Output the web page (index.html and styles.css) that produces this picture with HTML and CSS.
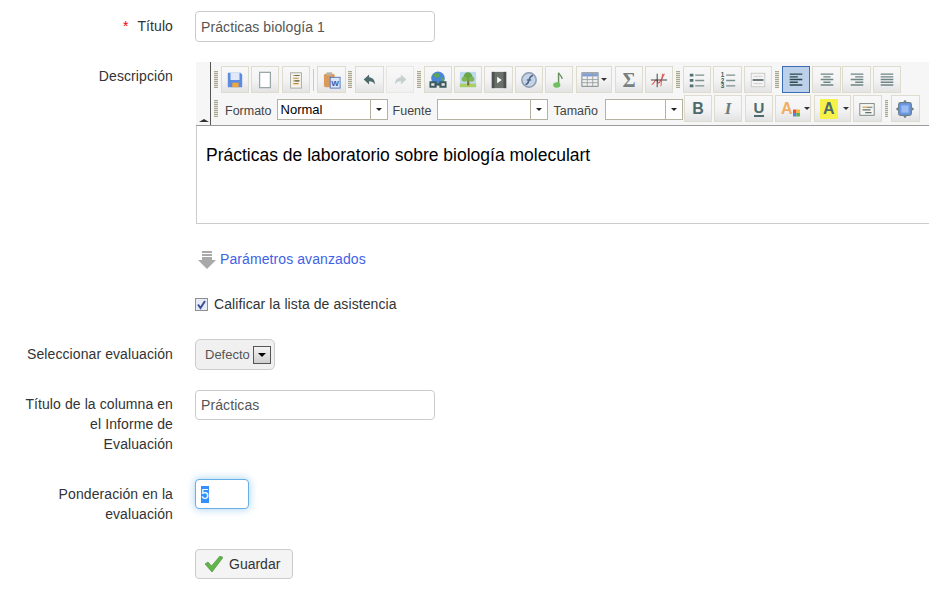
FILE: index.html
```html
<!DOCTYPE html>
<html lang="es">
<head>
    <meta charset="UTF-8">
    <meta name="viewport" content="width=device-width, initial-scale=1.0">
    <title>Editar asistencia</title>
    <link rel="stylesheet" href="styles.css">
</head>
<body>

<form class="form">

    <div class="row row-title">
        <label class="label"><span class="req">*</span>Título</label>
        <input class="input" type="text" value="Prácticas biología 1">
    </div>

    <div class="row row-editor">
        <label class="label">Descripción</label>
        <div class="editor">
            <div class="toolbar">
                <div class="tb-side"><span class="collapse"></span></div>
                <div class="tb-rows">
                    <div class="tb-row">
                        <span class="grip"></span>
                        <span class="btn"><svg viewBox="0 0 20 20"><path d="M2 2h14l2 2v14H2z" fill="#5c8be0"/><rect x="5" y="2" width="10" height="8" fill="#dfe9fa"/><rect x="7" y="13" width="7" height="5" fill="#f0a63a"/></svg></span>
                        <span class="btn mr"><svg viewBox="0 0 20 20"><rect x="4" y="1.500" width="12" height="17" fill="#fff" stroke="#9aa5a5" stroke-width="1.400"/></svg></span>
                        <span class="btn mr"><svg viewBox="0 0 20 20"><rect x="4" y="2" width="12" height="17" fill="#f4f2ea" stroke="#a3a79e"/><path d="M7 5h6M7 8h6M7 11h6M7 14h6" stroke="#c28a3c" stroke-width="1.200"/><path d="M9 5h5M9 11h5" stroke="#56705f" stroke-width="1.200"/></svg></span>
                        <span class="sep"></span>
                        <span class="btn wide"><svg viewBox="0 0 20 20"><rect x="1" y="3" width="12" height="15" rx="2" fill="#d99a5c"/><rect x="4" y="1.500" width="6" height="3.500" fill="#b7b3a5"/><rect x="8" y="7" width="11" height="12" fill="#dce6f7" stroke="#4f72b8"/><text x="9.300" y="16.500" class="tiny-w">W</text></svg></span>
                        <span class="grip"></span>
                        <span class="btn wide"><svg viewBox="0 0 20 20"><path d="M9 4 3 9.500 9 15v-3.500c3 0 5 .8 6.500 3.500 0-5-2.500-7.500-6.500-8z" fill="#4d6a6c"/></svg></span>
                        <span class="btn off mr"><svg viewBox="0 0 20 20"><path d="M11 4l6 5.500L11 15v-3.500c-3 0-5 .8-6.500 3.500 0-5 2.500-7.500 6.500-8z" fill="#c6d0d0"/></svg></span>
                        <span class="grip"></span>
                        <span class="btn"><svg viewBox="0 0 20 20"><circle cx="10" cy="8" r="7.500" fill="#4a86d8"/><path d="M6 3c3-1 6 0 6 2s-3 3-5 2-2-3-1-4zM13 8c2-1 4 0 4 2l-3 3z" fill="#5aa852"/><path d="M1.500 12.500h6v5h-6zM12.500 12.500h6v5h-6z" fill="#e6e6e6" stroke="#3d5a5c" stroke-width="2"/><path d="M6 15h8" stroke="#3d5a5c" stroke-width="2.500"/></svg></span>
                        <span class="btn"><svg viewBox="0 0 20 20"><rect x="1" y="1" width="18" height="17" fill="#bcd9ee"/><rect x="1" y="14" width="18" height="4" fill="#a9cf63"/><rect x="9" y="9" width="2.500" height="7" fill="#8a6a3c"/><circle cx="10" cy="6.500" r="5" fill="#6aa648"/><circle cx="6" cy="9" r="3" fill="#7fb552"/><circle cx="14" cy="9" r="3" fill="#7fb552"/></svg></span>
                        <span class="btn wide"><svg viewBox="0 0 20 20"><rect x="2" y="1" width="16" height="18" fill="#6c706d"/><rect x="2" y="1" width="3" height="18" fill="#4d514f"/><rect x="15" y="1" width="3" height="18" fill="#4d514f"/><path d="M8 6.500 13 10l-5 3.500z" fill="#fff"/></svg></span>
                        <span class="btn"><svg viewBox="0 0 20 20"><circle cx="10" cy="10" r="8" fill="#c5d3e6" stroke="#8a9ab0" stroke-width="1.600"/><path d="M6 15c3 0 3-2 4-5s2-5 4.500-5" fill="none" stroke="#4d6486" stroke-width="1.800"/><path d="M7.500 10h5" stroke="#4d6486" stroke-width="1.400"/></svg></span>
                        <span class="btn mr"><svg viewBox="0 0 20 20"><path d="M9.500 2v13" stroke="#6b8f5c" stroke-width="1.600"/><path d="M9.500 2c1 3 4 3 4 7" fill="none" stroke="#6b8f5c" stroke-width="1.400"/><ellipse cx="7.500" cy="15.500" rx="4" ry="3" fill="#6cc25e"/></svg></span>
                        <span class="btn btn-table"><svg viewBox="0 0 20 20"><rect x="1" y="2" width="18" height="15" fill="#efefef" stroke="#777e7e"/><rect x="1.500" y="2.500" width="17" height="3.500" fill="#7f9fd4"/><path d="M1 9.500h18M1 13h18M7 2v15M13 2v15" stroke="#9ba2a2"/></svg><i class="caret"></i></span>
                        <span class="btn"><span class="glyph sigma">Σ</span></span>
                        <span class="btn mr"><svg viewBox="0 0 20 20"><path d="M2 15c3-1 3-5 5-5s1 4 3 3 4-7 6-10" fill="none" stroke="#d9534f" stroke-width="1.300"/><path d="M1 10h18M8 3v15" stroke="#333" stroke-width="1"/><path d="M14 3 12 17" stroke="#d9534f"/></svg></span>
                        <span class="grip"></span>
                        <span class="btn"><svg viewBox="0 0 20 20"><path d="M2 3h4v3H2zM2 9h4v3H2zM2 15h4v3H2z" fill="#4f6f70"/><path d="M8 4.500h10M8 10.500h10M8 16.500h10" stroke="#7c8f8f" stroke-width="1.500"/></svg></span>
                        <span class="btn wide"><svg viewBox="0 0 20 20"><text x="2" y="7" class="tiny-n">1</text><text x="2" y="13" class="tiny-n">2</text><text x="2" y="19" class="tiny-n">3</text><path d="M8 4.500h10M8 10.500h10M8 16.500h10" stroke="#7c8f8f" stroke-width="1.500"/></svg></span>
                        <span class="btn mr"><svg viewBox="0 0 20 20"><rect x="2.500" y="2.500" width="15" height="15" fill="#f4f4f4" stroke="#c4c8c4"/><path d="M5 6h10M5 14h10" stroke="#c9cdc9"/><path d="M4 10h12" stroke="#5a6e6e" stroke-width="2"/></svg></span>
                        <span class="grip"></span>
                        <span class="btn active"><svg viewBox="0 0 20 20"><path d="M3 3.500h14M3 6.500h9M3 9.500h14M3 12.500h9M3 15.500h14" stroke="#2f4a4c" stroke-width="1.600"/></svg></span>
                        <span class="btn wide ml-tight"><svg viewBox="0 0 20 20"><path d="M3 3.500h14M6 6.500h8M3 9.500h14M6 12.500h8M3 15.500h14" stroke="#6e8585" stroke-width="1.600"/></svg></span>
                        <span class="btn wide"><svg viewBox="0 0 20 20"><path d="M3 3.500h14M8 6.500h9M3 9.500h14M8 12.500h9M3 15.500h14" stroke="#6e8585" stroke-width="1.600"/></svg></span>
                        <span class="btn"><svg viewBox="0 0 20 20"><path d="M3 3.500h14M3 6.500h14M3 9.500h14M3 12.500h14M3 15.500h14" stroke="#6e8585" stroke-width="1.600"/></svg></span>
                    </div>
                    <div class="tb-row">
                        <span class="grip"></span>
                        <span class="tb-label tb-format">Formato</span>
                        <span class="combo combo-format"><span class="combo-text">Normal</span><i class="combo-arrow"></i></span>
                        <span class="tb-label tb-font">Fuente</span>
                        <span class="combo combo-font"><span class="combo-text"></span><i class="combo-arrow"></i></span>
                        <span class="tb-label tb-size">Tamaño</span>
                        <span class="combo combo-size"><span class="combo-text"></span><i class="combo-arrow"></i></span>
                        <span class="btn"><span class="glyph bold">B</span></span>
                        <span class="btn mr"><span class="glyph ital">I</span></span>
                        <span class="btn"><span class="glyph under">U</span></span>
                        <span class="btn btn-color"><span class="glyph color">A</span><svg class="swatch" viewBox="0 0 8 8"><rect width="4" height="4" fill="#e8503a"/><rect x="4" width="4" height="4" fill="#f2b632"/><rect y="4" width="4" height="4" fill="#4f86d9"/><rect x="4" y="4" width="4" height="4" fill="#5cb04a"/></svg><i class="caret"></i></span>
                        <span class="btn btn-color btn-hilite"><span class="glyph hilite">A</span><i class="caret"></i></span>
                        <span class="btn wide mr"><svg viewBox="0 0 20 20"><rect x="2" y="4" width="16" height="13" fill="#f6f6f0" stroke="#75807f"/><path d="M5 8h5" stroke="#d9a65a" stroke-width="1.500"/><path d="M10 8h6M5 11h9M8 14h7" stroke="#5e7171" stroke-width="1.200"/></svg></span>
                        <span class="grip grip-thin"></span>
                        <span class="btn wide"><svg viewBox="0 0 20 20"><path d="M10 0l2 2H8zM10 20l-2-2h4zM0 10l2-2v4zM20 10l-2 2V8z" fill="#45606a"/><rect x="3" y="3" width="14" height="14" rx="2" fill="#6a98e6" stroke="#6a808a" stroke-width="1.400"/><rect x="6" y="6" width="8" height="8" fill="#9abcf2"/></svg></span>
                    </div>
                </div>
            </div>
            <div class="editor-body">Prácticas de laboratorio sobre biología moleculart</div>
        </div>
    </div>

    <div class="row row-link">
        <span></span>
        <a class="adv-link" href="#">
            <svg class="adv-ico" viewBox="0 0 18 18"><path d="M4 0h10v2H4zM4 3h10v2H4zM4 6h10v3h4l-9 9-9-9h4z" fill="#a9a9a9"/></svg>
            Parámetros avanzados
        </a>
    </div>

    <div class="row row-link">
        <span></span>
        <label class="check">
            <svg class="check-box" viewBox="0 0 13 13"><rect x=".5" y=".5" width="12" height="12" fill="#e6ebf5" stroke="#8e8f8f"/><path d="M3 6.500 5.500 10 10 3" fill="none" stroke="#3a4f9a" stroke-width="2"/></svg>
            Calificar la lista de asistencia
        </label>
    </div>

    <div class="row row-select">
        <label class="label">Seleccionar evaluación</label>
        <div class="select"><span>Defecto</span><i class="select-arrow"></i></div>
    </div>

    <div class="row row-col">
        <label class="label label-up">Título de la columna en el Informe de Evaluación</label>
        <input class="input input-short" type="text" value="Prácticas">
    </div>

    <div class="row row-weight">
        <label class="label">Ponderación en la evaluación</label>
        <div class="input input-num"><span class="selected">5</span></div>
    </div>

    <div class="row">
        <span></span>
        <button class="save" type="button">
            <svg viewBox="0 0 18 16"><path d="M0 8l3-2 3.500 4L15 0l3 1.500L7 16z" fill="#62b548" stroke="#3f8a39" stroke-width=".6"/></svg>
            Guardar
        </button>
    </div>

</form>

</body>
</html>
```

FILE: styles.css
```css
html, body {
    overflow-x: hidden;
}

body {
    margin: 0;
    background-color: #ffffff;
    color: #333333;
    font-family: "Liberation Sans", Arial, sans-serif;
    font-size: 14px;
    line-height: 20px;
    letter-spacing: 0.09px;
}

.form {
    padding-top: 11px;
}

.row {
    display: grid;
    grid-template-columns: 150px 1fr;
    column-gap: 22px;
    align-items: start;
    padding-left: 23px;
    margin-bottom: 25px;
}

.row-title {
    margin-bottom: 20px;
}

.row-select {
    margin-bottom: 20px;
}

.row-editor {
    margin-bottom: 24px;
}

.label {
    padding-top: 5px;
    text-align: right;
}

.label-up,
.row-editor .label {
    padding-top: 4px;
}

.req {
    color: #ff0000;
    margin-right: 9px;
}

.input {
    box-sizing: border-box;
    display: block;
    width: 240px;
    height: 31px;
    padding: 0 5px;
    border: 1px solid #cccccc;
    border-radius: 4px;
    background-color: #ffffff;
    color: #555555;
    font: inherit;
    letter-spacing: inherit;
}

.input-short {
    height: 30px;
}

.input-num {
    width: 54px;
    height: 30px;
    line-height: 28px;
    border-color: #66afe9;
    box-shadow: 0 0 8px rgba(102, 175, 233, 0.6);
}

.selected {
    display: inline-block;
    background-color: #3390ff;
    color: #ffffff;
    line-height: 17px;
}

/* editor */

.editor {
    width: 760px;
    margin-left: 1px;
    letter-spacing: 0;
}

.toolbar {
    display: flex;
    height: 63px;
    background-color: #f6f6f6;
    border-bottom: 1px solid #9a9a9a;
}

.tb-side {
    position: relative;
    width: 14px;
    border-right: 1px solid #555555;
}

.collapse {
    position: absolute;
    left: 3px;
    bottom: 3px;
    border-left: 5px solid transparent;
    border-right: 5px solid transparent;
    border-bottom: 3px solid #333333;
}

.tb-rows {
    display: flex;
    flex-direction: column;
    gap: 2px;
    padding: 4px 0 0 3px;
}

.tb-row {
    display: flex;
    align-items: center;
    height: 27px;
}

.grip {
    flex: none;
    width: 4px;
    height: 17px;
    margin-right: 3px;
    background: repeating-linear-gradient(to bottom, #aaa793 0, #aaa793 1px, #e4e2d6 1px, #e4e2d6 2px);
}

.grip-thin {
    width: 3px;
}

.btn {
    box-sizing: border-box;
    flex: none;
    display: flex;
    align-items: center;
    justify-content: center;
    width: 28px;
    height: 27px;
    margin-right: 2px;
    border: 1px solid #dedbcf;
    background: linear-gradient(to bottom, #f8f8f8 0, #f3f3f3 55%, #e3e3e3 100%);
}

.btn > svg {
    width: 18px;
    height: 18px;
}

.wide {
    width: 29px;
}

.mr {
    margin-right: 3px;
}

.ml-tight {
    margin-right: 1px;
}

.btn.off {
    border-color: #e8e8e2;
    background: linear-gradient(to bottom, #f8f8f8 0, #f1f1f1 100%);
}

.btn.active {
    border-color: #3a6db5;
    background: #bcd0ea;
}

.sep {
    flex: none;
    width: 1px;
    height: 22px;
    margin-right: 3px;
    background-color: #c9c9c9;
}

.btn-table {
    width: 36px;
    margin-right: 3px;
    gap: 2px;
}

.caret {
    border-left: 3px solid transparent;
    border-right: 3px solid transparent;
    border-top: 3px solid #333333;
}

.glyph {
    font-family: "Liberation Serif", serif;
    font-size: 17px;
    line-height: 20px;
    color: #4d6a6c;
}

.sigma {
    color: #77807c;
    font-size: 20px;
    font-weight: bold;
}

.bold {
    font-family: "Liberation Sans", sans-serif;
    font-weight: bold;
    font-size: 16px;
}

.ital {
    font-style: italic;
    font-weight: bold;
    color: #6b7b7b;
    font-size: 17px;
}

.under {
    font-family: "Liberation Sans", sans-serif;
    font-weight: bold;
    font-size: 15px;
    line-height: 15px;
    border-bottom: 2px solid #4d6a6c;
}

.btn-color {
    position: relative;
    width: 36px;
    margin-right: 3px;
    gap: 1px;
    justify-content: flex-start;
    padding-left: 5px;
}

.btn-hilite {
    width: 37px;
    margin-right: 2px;
}

.color {
    font-family: "Liberation Sans", sans-serif;
    font-weight: bold;
    color: #f2ae63;
    width: 14px;
    font-size: 16px;
}

.btn-color .swatch {
    width: 8px;
    height: 8px;
    margin: 8px 3px 0 -1px;
}

.hilite {
    font-family: "Liberation Sans", sans-serif;
    font-weight: bold;
    font-size: 16px;
    background-color: #f6f24a;
    padding: 0 3px;
    margin-right: 4px;
}

.tb-label {
    flex: none;
    padding-top: 4px;
    font-size: 12.5px;
    color: #444444;
    margin-right: 5px;
}

.tb-format {
    margin-left: 4px;
}

.tb-font {
    margin-right: 6px;
}

.tb-size {
    margin-right: 7px;
}

.combo {
    box-sizing: border-box;
    flex: none;
    display: flex;
    height: 21px;
    margin: 2px 5px 0 0;
    border: 1px solid #b5b2a2;
    background-color: #ffffff;
}

.combo-format {
    width: 111px;
}

.combo-font {
    width: 111px;
}

.combo-size {
    width: 78px;
    margin-right: 1px;
}

.combo-text {
    flex: 1;
    padding-left: 3px;
    font-size: 13px;
    line-height: 19px;
    color: #000000;
}

.combo-arrow {
    position: relative;
    flex: none;
    width: 16px;
    border-left: 1px solid #b5b2a2;
}

.combo-arrow::after {
    content: "";
    position: absolute;
    left: 5px;
    top: 8px;
    border-left: 3px solid transparent;
    border-right: 3px solid transparent;
    border-top: 3px solid #222222;
}

.editor-body {
    box-sizing: border-box;
    height: 98px;
    padding: 19px 9px 0;
    border: 1px solid #cccccc;
    border-top: none;
    color: #000000;
    font-size: 17.5px;
}

.tiny-w {
    font: bold 9px "Liberation Sans", sans-serif;
    fill: #3a5aa8;
}

.tiny-n {
    font: bold 7px "Liberation Sans", sans-serif;
    fill: #3f5f60;
}

/* other controls */

.adv-link {
    display: flex;
    align-items: center;
    gap: 4px;
    padding-left: 3px;
    color: #3f62e6;
    text-decoration: none;
}

.adv-ico {
    width: 18px;
    height: 18px;
    margin-top: 3px;
}

.check {
    display: flex;
    align-items: center;
    gap: 6px;
}

.check-box {
    width: 13px;
    height: 13px;
}

.select {
    box-sizing: border-box;
    display: flex;
    align-items: center;
    justify-content: space-between;
    width: 80px;
    height: 31px;
    padding: 0 3px 0 9px;
    border: 1px solid #cccccc;
    border-radius: 5px;
    background-color: #f0f0f0;
    color: #555555;
    font-size: 13px;
    letter-spacing: 0;
}

.select-arrow {
    position: relative;
    box-sizing: border-box;
    width: 18px;
    height: 18px;
    border: 1px solid #555555;
    background: linear-gradient(to bottom, #f4f4f4, #cfcfcf);
}

.select-arrow::after {
    content: "";
    position: absolute;
    left: 4px;
    top: 6px;
    border-left: 4px solid transparent;
    border-right: 4px solid transparent;
    border-top: 4px solid #000000;
}

.save {
    box-sizing: border-box;
    display: flex;
    align-items: center;
    gap: 6px;
    width: 98px;
    height: 30px;
    padding: 0 0 0 9px;
    border: 1px solid #cccccc;
    border-radius: 4px;
    background-color: #f4f4f4;
    color: #333333;
    font: inherit;
}

.save svg {
    width: 18px;
    height: 16px;
}
```
